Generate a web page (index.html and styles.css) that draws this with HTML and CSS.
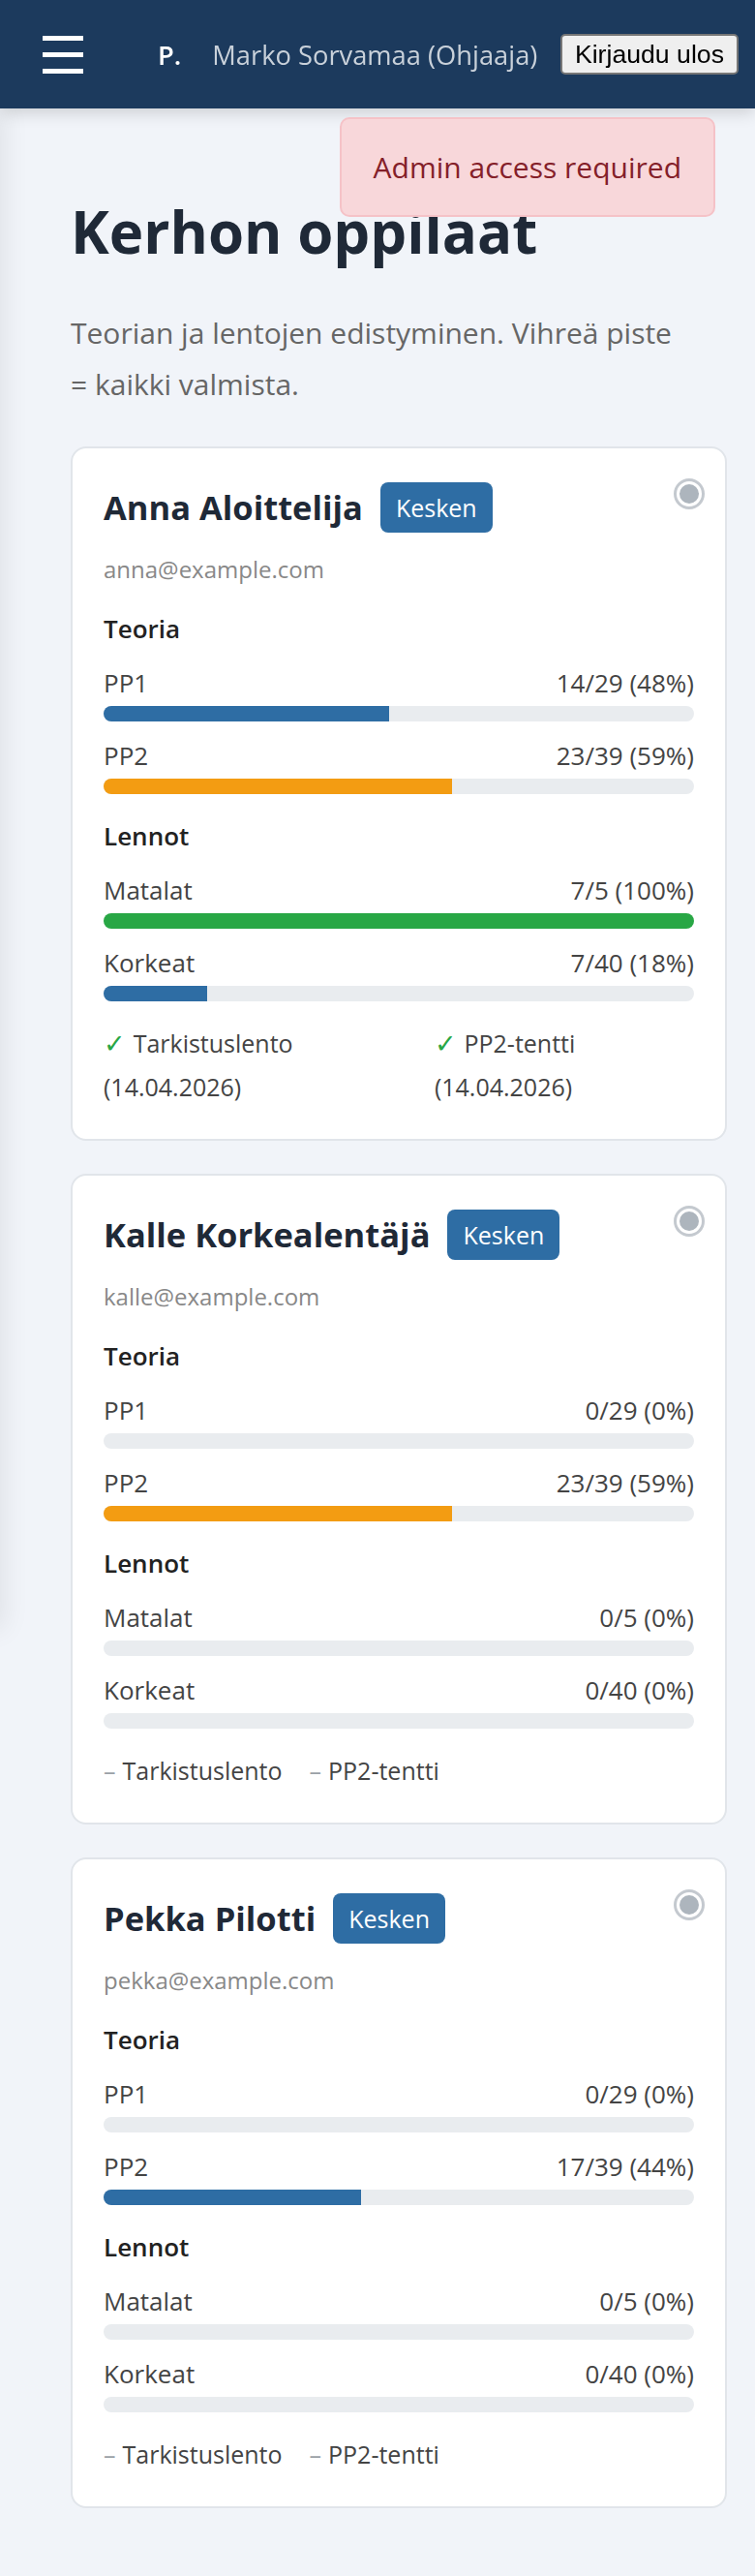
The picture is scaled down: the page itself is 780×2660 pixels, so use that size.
FILE: index.html
```html
<!DOCTYPE html>
<html lang="fi">
<head>
<meta charset="utf-8">
<title>Kerhon oppilaat</title>
<link rel="stylesheet" href="styles.css">
</head>
<body>
<header class="topbar">
  <button class="menu" aria-label="Valikko"><span></span><span></span><span></span></button>
  <span class="brand">P.</span>
  <span class="user">Marko Sorvamaa (Ohjaaja)</span>
  <button class="logout">Kirjaudu ulos</button>
</header>
<aside class="sidebar"></aside>
<div class="toast">Admin access required</div>

<main class="content">
  <h1>Kerhon oppilaat</h1>
  <p class="lead">Teorian ja lentojen edistyminen. Vihreä piste = kaikki valmista.</p>

  <div class="cards">
    <article class="card">
      <span class="status"></span>
      <div class="card-head"><h2>Anna Aloittelija</h2><span class="badge">Kesken</span></div>
      <div class="email">anna@example.com</div>
      <h3>Teoria</h3>
      <div class="row"><div class="row-top"><span>PP1</span><span>14/29 (48%)</span></div><div class="track"><div class="fill blue" style="width:48.3%"></div></div></div>
      <div class="row"><div class="row-top"><span>PP2</span><span>23/39 (59%)</span></div><div class="track"><div class="fill orange" style="width:59%"></div></div></div>
      <h3>Lennot</h3>
      <div class="row"><div class="row-top"><span>Matalat</span><span>7/5 (100%)</span></div><div class="track"><div class="fill green" style="width:100%"></div></div></div>
      <div class="row"><div class="row-top"><span>Korkeat</span><span>7/40 (18%)</span></div><div class="track"><div class="fill blue" style="width:17.5%"></div></div></div>
      <div class="checks">
        <span class="check done">Tarkistuslento (14.04.2026)</span>
        <span class="check done">PP2-tentti (14.04.2026)</span>
      </div>
    </article>

    <article class="card">
      <span class="status"></span>
      <div class="card-head"><h2>Kalle Korkealentäjä</h2><span class="badge">Kesken</span></div>
      <div class="email">kalle@example.com</div>
      <h3>Teoria</h3>
      <div class="row"><div class="row-top"><span>PP1</span><span>0/29 (0%)</span></div><div class="track"><div class="fill blue" style="width:0%"></div></div></div>
      <div class="row"><div class="row-top"><span>PP2</span><span>23/39 (59%)</span></div><div class="track"><div class="fill orange" style="width:59%"></div></div></div>
      <h3>Lennot</h3>
      <div class="row"><div class="row-top"><span>Matalat</span><span>0/5 (0%)</span></div><div class="track"><div class="fill blue" style="width:0%"></div></div></div>
      <div class="row"><div class="row-top"><span>Korkeat</span><span>0/40 (0%)</span></div><div class="track"><div class="fill blue" style="width:0%"></div></div></div>
      <div class="checks">
        <span class="check pending">Tarkistuslento</span>
        <span class="check pending">PP2-tentti</span>
      </div>
    </article>

    <article class="card">
      <span class="status"></span>
      <div class="card-head"><h2>Pekka Pilotti</h2><span class="badge">Kesken</span></div>
      <div class="email">pekka@example.com</div>
      <h3>Teoria</h3>
      <div class="row"><div class="row-top"><span>PP1</span><span>0/29 (0%)</span></div><div class="track"><div class="fill blue" style="width:0%"></div></div></div>
      <div class="row"><div class="row-top"><span>PP2</span><span>17/39 (44%)</span></div><div class="track"><div class="fill blue" style="width:43.6%"></div></div></div>
      <h3>Lennot</h3>
      <div class="row"><div class="row-top"><span>Matalat</span><span>0/5 (0%)</span></div><div class="track"><div class="fill blue" style="width:0%"></div></div></div>
      <div class="row"><div class="row-top"><span>Korkeat</span><span>0/40 (0%)</span></div><div class="track"><div class="fill blue" style="width:0%"></div></div></div>
      <div class="checks">
        <span class="check pending">Tarkistuslento</span>
        <span class="check pending">PP2-tentti</span>
      </div>
    </article>
  </div>
</main>
</body>
</html>
```

FILE: styles.css
```css
* { box-sizing: border-box; }
html, body { margin: 0; padding: 0; }
body {
  font-family: "Open Sans", "Noto Sans", sans-serif;
  background: #f1f4f9;
  color: #333;
}

/* Top bar */
.topbar {
  position: relative;
  z-index: 3;
  height: 112px;
  background: #1c3a5d;
  display: flex;
  align-items: center;
  box-shadow: 0 4px 16px rgba(0, 0, 0, 0.16);
}
.menu {
  width: 42px;
  height: 39px;
  margin-left: 44px;
  padding: 0;
  border: 0;
  background: none;
  display: flex;
  flex-direction: column;
  justify-content: space-between;
}
.menu span { display: block; height: 5px; background: #fff; }
.brand {
  margin-left: 77px;
  font-size: 27.3px;
  font-weight: 600;
  color: #fff;
}
.user {
  margin-left: 32px;
  font-size: 27.3px;
  color: #c9d1da;
}
.logout {
  margin-left: auto;
  margin-right: 17px;
  height: 42px;
  padding: 2px 13px;
  font-family: "Liberation Sans", Arial, sans-serif;
  font-size: 26.67px;
  color: #000;
  background: #efefef;
  border: 2px solid #767676;
  border-radius: 5px;
}

/* Off-canvas sidebar (hidden, only its shadow shows) */
.sidebar {
  position: fixed;
  top: 112px;
  left: -300px;
  width: 300px;
  height: 1570px;
  background: #fff;
  box-shadow: 4px 0 26px rgba(0, 0, 0, 0.08);
  z-index: 2;
}

/* Toast */
.toast {
  position: fixed;
  top: 121px;
  right: 41px;
  z-index: 5;
  padding: 27px 33px;
  background: #f8d7da;
  border: 2px solid #f5c2c7;
  border-radius: 10px;
  color: #842029;
  font-size: 30px;
  line-height: 45px;
}

/* Main */
.content { padding: 91px 29px 74px 73px; }
.content h1 {
  margin: 0 0 42px;
  font-size: 60px;
  line-height: 72px;
  font-weight: 700;
  color: #1f2937;
}
.lead {
  margin: 0 0 38px;
  max-width: 640px;
  font-size: 30px;
  line-height: 53px;
  color: #666;
}
.cards { display: flex; flex-direction: column; gap: 34px; }

.card {
  position: relative;
  background: #fff;
  border: 2px solid #e1e5ea;
  border-radius: 16px;
  padding: 32px;
}
.status {
  position: absolute;
  top: 31px;
  right: 21px;
  width: 32px;
  height: 32px;
  padding: 3px;
  border-radius: 50%;
  border: 3px solid #c4c9cf;
  background: #adb5bd;
  background-clip: content-box;
}
.card-head { display: flex; align-items: center; gap: 18px; }
.card-head h2 {
  margin: 0;
  font-size: 34.5px;
  line-height: 58px;
  font-weight: 700;
  color: #1f2937;
}
.badge {
  padding: 8px 16px;
  background: #2e6da4;
  color: #fff;
  font-size: 25px;
  line-height: 36px;
  border-radius: 8px;
}
.email {
  margin-top: 17px;
  font-size: 24px;
  line-height: 36px;
  color: #888;
}
.card h3 {
  margin: 24px 0 17px;
  font-size: 26px;
  line-height: 39px;
  font-weight: 600;
  color: #222;
}
.row + .row { margin-top: 16px; }
.row-top {
  display: flex;
  justify-content: space-between;
  font-size: 26px;
  line-height: 38px;
  color: #444;
}
.track {
  margin-top: 5px;
  height: 16px;
  border-radius: 8px;
  background: #e9ecef;
  overflow: hidden;
}
.fill { height: 100%; }
.fill.blue { background: #2e6da4; }
.fill.orange { background: #f39c12; }
.fill.green { background: #28a745; }

.checks {
  display: flex;
  gap: 28px;
  margin-top: 21px;
  font-size: 25px;
  line-height: 44px;
  color: #444;
}
.check.done::before {
  content: "✓";
  margin-right: 8px;
  font-family: "DejaVu Sans", sans-serif;
  font-size: 27px;
  color: #28a745;
}
.check.pending::before {
  content: "–";
  margin-right: 7px;
  color: #9aa0a6;
}
```
